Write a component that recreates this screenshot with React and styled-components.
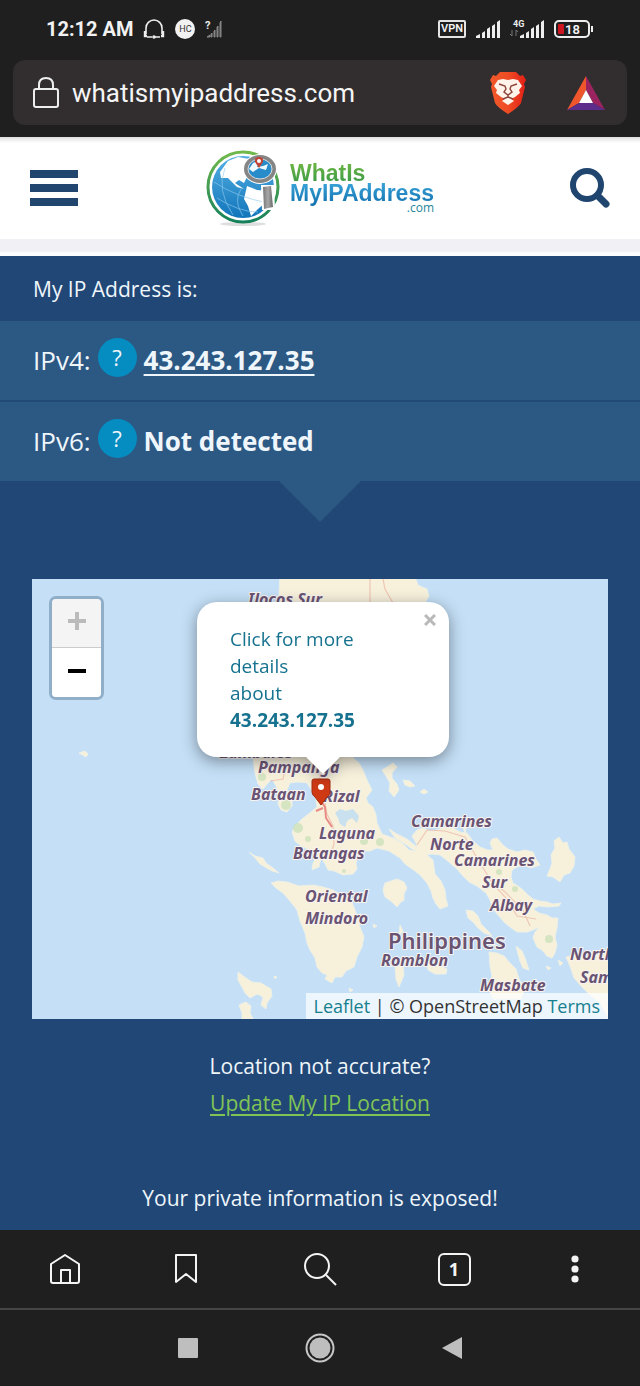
import React, { useState } from "react";
import styled, { createGlobalStyle } from "styled-components";

const GlobalStyle = createGlobalStyle`
  * {
    box-sizing: border-box;
  }
  body {
    margin: 0;
    background: #1f1f1f;
    font-family: "Open Sans", "Noto Sans", sans-serif;
  }
  button {
    border: 0;
    padding: 0;
    background: none;
    color: inherit;
    font: inherit;
    cursor: pointer;
  }
  svg {
    display: block;
  }
`;

/* ---------- status bar and address bar ---------- */

const StatusBar = styled.div`
  display: flex;
  align-items: center;
  justify-content: space-between;
  height: 60px;
  padding: 0 45px 2px 46px;
  color: #f2f2f2;
  font-family: Roboto, sans-serif;
`;

const StatusGroup = styled.div`
  display: flex;
  align-items: center;
  gap: ${(props) => props.$gap};
`;

const Clock = styled.time`
  font-size: 20px;
  font-weight: 700;
`;

const VpnBadge = styled.span`
  padding: 0 1px;
  border: 2px solid #e4e4e4;
  border-radius: 2px;
  font-size: 11px;
  font-weight: 600;
  line-height: 14px;
`;

const RoundBadge = styled.span`
  width: 20px;
  height: 20px;
  border-radius: 50%;
  background: #f2f2f2;
  color: #333;
  font-size: 9px;
  line-height: 20px;
  text-align: center;
`;

const AddressBar = styled.div`
  display: flex;
  align-items: center;
  gap: 13px;
  height: 65px;
  margin: 0 13px 12px;
  padding: 0 22px 0 20px;
  border-radius: 12px;
  background: #322e2f;
`;

const AddressInput = styled.input`
  flex: 1;
  min-width: 0;
  padding: 0;
  border: 0;
  outline: 0;
  background: none;
  color: #f5f5f5;
  font-family: Roboto, sans-serif;
  font-size: 26px;
`;

const BarButton = styled.button`
  margin-left: ${(props) => props.$space || "0"};
`;

/* ---------- site header ---------- */

const SiteHeader = styled.header`
  display: flex;
  align-items: center;
  justify-content: space-between;
  height: 102px;
  padding: 0 30px;
  background: linear-gradient(#dedede, #fff 6px);
`;

const HeaderStrip = styled.div`
  height: 17px;
  border-bottom: 4px solid #fbfdfd;
  background: #f0f0f5;
`;

const MenuButton = styled.button`
  display: flex;
  flex-direction: column;
  gap: 6px;
  width: 48px;
`;

const MenuLine = styled.span`
  height: 8px;
  background: #20456f;
`;

const Logo = styled.a`
  display: flex;
  align-items: center;
  gap: 8px;
  margin-right: 8px;
  text-decoration: none;
`;

const LogoText = styled.span`
  display: flex;
  flex-direction: column;
  font-family: "Liberation Sans", Arial, sans-serif;
  font-size: 23px;
  font-weight: 700;
  line-height: 20px;
`;

const LogoLine = styled.span`
  margin-bottom: -5px;
  padding-bottom: 5px;
  background: ${(props) => props.$fill};
  background-clip: text;
  color: transparent;
`;

const LogoDomain = styled.span`
  align-self: flex-end;
  color: #27869b;
  font-family: "Open Sans", sans-serif;
  font-size: 12px;
  font-weight: 500;
  line-height: 10px;
`;

/* ---------- ip panel ---------- */

const Main = styled.main`
  background: #214776;
  color: #eff6fb;
`;

const Heading = styled.h1`
  margin: 0;
  padding: 2px 33px 0;
  font-size: 21px;
  font-weight: 400;
  line-height: 63px;
`;

const IpRow = styled.div`
  display: flex;
  align-items: center;
  gap: 7px;
  height: ${(props) => (props.$divided ? "81px" : "79px")};
  padding: 0 33px 2px;
  border-bottom: ${(props) => (props.$divided ? "2px solid #214a77" : "0")};
  background: #2c5884;
`;

const IpLabel = styled.span`
  font-size: 26px;
`;

const HelpButton = styled.button`
  width: 39px;
  height: 39px;
  margin-bottom: 4px;
  border-radius: 50%;
  background: #058cc0;
  font-size: 22px;
  line-height: 39px;
`;

const IpValue = styled.strong`
  font-size: 26px;
  font-weight: 700;
`;

const IpLink = styled.a`
  color: inherit;
  text-decoration-thickness: 2px;
  text-underline-offset: 4px;
`;

const PanelArrow = styled.div`
  width: 82px;
  height: 41px;
  margin: 0 auto 57px;
  background: #2c5884;
  clip-path: polygon(0 0, 100% 0, 50% 100%);
`;

/* ---------- map ---------- */

const MapFrame = styled.section`
  position: relative;
  height: 440px;
  margin: 0 32px;
  overflow: hidden;
  background: #c4dff6;
`;

const ZoomControl = styled.div`
  position: absolute;
  top: 17px;
  left: 17px;
  display: flex;
  flex-direction: column;
  width: 55px;
  border: 3px solid #91aec9;
  border-radius: 7px;
  overflow: hidden;
`;

const ZoomButton = styled.button`
  display: grid;
  place-items: center;
  height: 48px;
  padding-bottom: 4px;
  background: ${(props) => (props.disabled ? "#f4f4f4" : "#fff")};
  color: ${(props) => (props.disabled ? "#bbb" : "#000")};
  & + & {
    height: 50px;
    border-top: 1px solid #ccc;
  }
`;

const PopupAnchor = styled.div`
  position: absolute;
  top: 23px;
  left: 50%;
  width: 252px;
  margin-left: -123px;
  filter: drop-shadow(0 4px 8px rgba(0, 0, 0, 0.4));
`;

const PopupCard = styled.div`
  height: 155px;
  padding: 24px 60px 22px 33px;
  border-radius: 20px;
  background: #fff;
`;

const PopupLink = styled.a`
  display: block;
  color: #16728f;
  font-size: 19px;
  line-height: 27px;
  text-decoration: none;
`;

const PopupTip = styled.div`
  width: 36px;
  height: 18px;
  margin: -1px auto 0;
  background: #fff;
  clip-path: polygon(0 0, 100% 0, 50% 100%);
`;

const PopupClose = styled.button`
  position: absolute;
  top: 12px;
  right: 13px;
  color: #b9b9b9;
`;

const Attribution = styled.div`
  position: absolute;
  right: 0;
  bottom: 0;
  padding: 0 8px;
  background: rgba(255, 255, 255, 0.7);
  color: #333;
  font-size: 18px;
  line-height: 26px;
  white-space: nowrap;
`;

const MapLink = styled.a`
  color: #17808f;
  text-decoration: none;
`;

const Notes = styled.div`
  padding: 29px 32px 13px;
  font-size: 21px;
  line-height: 37px;
  text-align: center;
`;

const Note = styled.p`
  margin: ${(props) => props.$top || "0"} 0 0;
`;

const UpdateLink = styled.a`
  color: #80c455;
  text-underline-offset: 3px;
`;

/* ---------- bottom bars ---------- */

const BrowserBar = styled.nav`
  display: grid;
  grid-template-columns: 130fr 112fr 156fr 112fr 130fr;
  height: 80px;
  border-bottom: 2px solid #454545;
  color: #f4f4f4;
`;

const ToolButton = styled.button`
  display: grid;
  place-items: center;
`;

const TabCount = styled.span`
  width: 33px;
  height: 33px;
  border: 2px solid #f4f4f4;
  border-radius: 6px;
  font-family: "Noto Sans", sans-serif;
  font-size: 18px;
  font-weight: 700;
  line-height: 29px;
`;

const SystemBar = styled.nav`
  display: flex;
  justify-content: center;
  gap: 68px;
  height: 75px;
`;

const SystemButton = styled(ToolButton)`
  width: 64px;
`;

/* land outlines on a 575 x 440 grid */
const islands = [
  // Luzon
  "M247 -2L382 -2L385 6L389 8L394 10L396 17L392 24L380 60L350 120L320 179L326 184L330 191L334 201L339 211L333 219L335 224L340 228L343 236L344 244L349 255L360 259L369 264L376 271L381 272L384 266L379 257L384 251L390 249L397 252L404 251L412 248L420 249L427 253L434 254L440 262L447 268L455 271L460 271L457 264L459 260L464 259L470 266L475 270L484 273L492 271L500 273L503 280L507 286L498 289L490 286L484 288L479 291L478 298L480 304L485 307L490 311L495 316L500 320L507 322L514 323L520 325L528 324L526 327L514 328L506 327L500 330L506 334L514 336L519 339L525 339L524 349L522 358L524 366L522 374L519 379L514 377L509 371L504 368L500 359L502 353L507 348L500 351L494 353L484 353L477 348L471 343L465 336L460 330L457 321L453 314L444 307L436 303L429 296L424 290L417 284L411 279L407 276L399 275L394 276L400 281L401 288L402 295L408 302L412 311L413 320L415 327L407 330L403 325L400 319L398 312L394 304L387 296L382 292L372 285L367 279L356 272L344 269L337 272L330 272L325 276L323 284L324 290L320 295L310 296L301 292L295 291L291 283L288 279L286 288L279 291L280 284L284 278L277 271L268 267L262 262L259 253L262 247L269 240L278 233L284 228L283 220L279 212L274 204L265 203L257 204L254 211L259 219L259 227L254 233L248 231L245 225L246 216L243 207L239 200L235 204L230 210L225 205L222 194L220 179L240 110Z",
  // Lubang
  "M216 273L222 277L230 279L233 284L240 289L246 294L239 292L232 288L227 285L223 280Z",
  // Mindoro
  "M238 304L245 302L254 303L266 307L280 306L290 308L300 311L308 316L317 318L322 331L325 340L327 348L331 358L329 368L324 378L321 388L313 392L309 398L302 398L299 404L292 400L294 396L289 394L284 388L282 379L277 371L274 364L272 354L267 342L264 331L257 322L250 314L243 309Z",
  // Marinduque
  "M352 304L358 302L364 300L371 303L374 309L371 315L371 321L367 324L364 328L359 323L352 318L350 311Z",
  // Polillo group
  "M349 191L354 188L360 184L364 188L359 194L359 199L364 205L366 211L361 218L356 212L357 204L353 197Z",
  "M370 201L377 202L382 207L377 208L372 206Z",
  "M387 213L391 210L395 213L391 215Z",
  "M356 250L364 255L374 260L384 268L382 272L372 265L362 259Z",
  // Catanduanes
  "M526 258L530 264L534 263L536 270L542 278L541 287L537 294L531 296L527 303L520 298L514 297L517 290L519 284L518 276L522 269L521 262Z",
  // Burias and Ticao
  "M433 331L440 332L445 337L448 345L456 353L459 357L451 354L445 349L440 343L435 339Z",
  "M483 367L489 372L492 379L496 391L490 389L487 382L485 375Z",
  // Masbate
  "M456 373L464 374L471 377L477 384L483 390L486 400L492 410L488 420L460 420L455 408L459 397L457 387Z",
  // Samar
  "M533 378L545 375L555 378L563 376L576 371L576 440L567 424L556 415L549 408L541 399L537 387Z",
  // Romblon and Sibuyan
  "M367 346L370 352L366 356ZM362 388L370 385L371 396L366 408L363 400Z",
  "M394 383L405 386L414 390L413 395L402 395L395 391Z",
  // Calamian
  "M205 393L213 399L219 403L228 404L238 410L239 417L234 424L233 430L228 426L230 418L224 415L217 419L212 414L209 408L205 401Z",
  "M206 426L213 423L218 427L217 434L220 440L209 440L209 434Z",
  "M46 174L52 172L55 175L53 178Z",
  "M513 387L518 389L515 391ZM525 381L530 384L527 387ZM340 345L344 347L341 349ZM430 248L433 249L432 254ZM241 397L244 398L242 400ZM316 409L320 411L317 413Z",
];

const roads = [
  "M278 180L286 192L288 207L291 220L294 235L300 247L301 265L297 277",
  "M237 202L250 200L252 190L262 186",
  "M384 266L394 251L412 252L432 258L444 279L460 305L474 320L484 337L503 340",
  "M456 300L472 313L490 331L497 347",
  "M337 0V24",
  "M350 0L352 10L360 24",
];

const parks = [
  [253, 226, 5],
  [265, 249, 5],
  [229, 198, 4],
  [347, 263, 4],
  [466, 293, 3],
  [482, 310, 3],
  [516, 360, 4],
  [275, 260, 3],
  [311, 292, 2],
  [331, 262, 4],
];

const places = [
  { name: "Ilocos Sur", x: 215, y: 26 },
  { name: "Zambales", x: 187, y: 179 },
  { name: "Pampanga", x: 225, y: 194 },
  { name: "Bataan", x: 218, y: 221 },
  { name: "Rizal", x: 290, y: 223 },
  { name: "Laguna", x: 286, y: 260 },
  { name: "Batangas", x: 260, y: 280 },
  { name: "Oriental", x: 272, y: 323 },
  { name: "Mindoro", x: 272, y: 345 },
  { name: "Camarines", x: 378, y: 248 },
  { name: "Norte", x: 397, y: 271 },
  { name: "Camarines", x: 421, y: 287 },
  { name: "Sur", x: 449, y: 309 },
  { name: "Albay", x: 457, y: 332 },
  { name: "Romblon", x: 348, y: 387 },
  { name: "Masbate", x: 447, y: 412 },
  { name: "Northern", x: 537, y: 381 },
  { name: "Samar", x: 547, y: 404 },
];

const PlaceName = styled.text`
  fill: #6a5474;
  stroke: #f8f3ef;
  stroke-width: 2px;
  paint-order: stroke;
  font-family: "Noto Sans", sans-serif;
  font-size: ${(props) => (props.$country ? "22px" : "16px")};
  font-style: ${(props) => (props.$country ? "normal" : "italic")};
  font-weight: ${(props) => (props.$country ? 600 : 700)};
`;

const MapCanvas = () => (
  <svg
    width="100%"
    height="100%"
    viewBox="-1 0 576 440"
    preserveAspectRatio="xMidYMid slice"
  >
    <g fill="#f7f1dc" stroke="#edf0e6" strokeLinejoin="round">
      {islands.map((d) => (
        <path key={d} d={d} />
      ))}
    </g>
    <path
      d="M302 234L307 230L313 232L320 230L326 237L324 244L319 239L314 242L312 248L307 245L305 239Z"
      fill="#c9e0ef"
    />
    <g fill="#c9dfb8">
      {parks.map(([x, y, r]) => (
        <circle key={`${x}-${y}`} cx={x} cy={y} r={r} opacity="0.75" />
      ))}
    </g>
    <g fill="none" stroke="#ecb9a6" strokeWidth="1.2" opacity="0.75">
      {roads.map((d) => (
        <path key={d} d={d} />
      ))}
    </g>
    <path
      d="M288 222L292 228L293 239L299 248M290 229L283 232"
      fill="none"
      stroke="#e98b86"
      strokeWidth="2"
    />
    {places.map((place) => (
      <PlaceName key={place.name + place.y} x={place.x} y={place.y}>
        {place.name}
      </PlaceName>
    ))}
    <PlaceName $country x="355" y="370">
      Philippines
    </PlaceName>
    <path
      d="M281 200H295Q297 200 297 202V213Q297 216 294 218L288 226L282 218Q279 216 279 213V202Q279 200 281 200Z"
      fill="#cf3a15"
      stroke="#9f2c12"
    />
    <circle cx="288" cy="208" r="3" fill="#fff" />
  </svg>
);

const SignalIcon = () => (
  <svg width="24" height="18" viewBox="0 0 24 18" fill="#eee">
    <path d="M0 18V16L4 14V18ZM6 13L9 11V18H6ZM11 9L14 7V18H11ZM16 6L19 4V18H16ZM21 2L24 0V18H21Z" />
  </svg>
);

const HeadsetIcon = () => (
  <svg width="22" height="20" viewBox="0 0 22 20" fill="none" stroke="#eee" strokeWidth="1.6">
    <path d="M3 15V9A8 8 0 0 1 19 9V15" />
    <path d="M2 12V17H4M20 12V17H18" strokeWidth="2.4" />
    <path d="M4 18H9M12 18H17" />
    <circle cx="11" cy="18" r="1" fill="#eee" />
  </svg>
);

const NoSimIcon = () => (
  <svg width="17" height="18" viewBox="0 0 17 18">
    <path
      d="M2 17L5 15V17ZM6 14L7 13V17H6ZM9 11L10 10V17H9ZM12 7L13 6V17H12ZM15 3L16 1V17H15Z"
      fill="#777"
      stroke="#888"
    />
    <text x="0" y="9" fill="#eee" fontFamily="Roboto" fontSize="11" fontWeight="700">
      ?
    </text>
  </svg>
);

const MobileIcon = () => (
  <svg width="34" height="20" viewBox="0 0 34 20">
    <g fill="#eee">
      <path d="M10 19V17L14 15V19ZM16 14L19 12V19H16ZM21 10L24 8V19H21ZM26 7L29 5V19H26ZM31 3L34 1V19H31Z" />
      <text x="3" y="8" fontFamily="Roboto" fontSize="9" fontWeight="700">
        4G
      </text>
    </g>
    <path d="M2 11V17L0 15M6 17V11L8 13" fill="none" stroke="#777" />
  </svg>
);

const BatteryIcon = () => (
  <svg width="41" height="18" viewBox="0 0 41 18">
    <rect x="1" y="1" width="34" height="16" rx="4" fill="none" stroke="#eee" strokeWidth="2" />
    <rect x="4" y="4" width="6" height="10" rx="1" fill="#cc1620" />
    <path d="M37 6H39V12H37Z" fill="#eee" />
    <text x="11" y="14" fill="#f4f4f4" fontFamily="Roboto" fontSize="13" fontWeight="600">
      18
    </text>
  </svg>
);

const LockIcon = () => (
  <svg width="26" height="31" viewBox="0 0 26 31" fill="none" stroke="#eee" strokeWidth="2">
    <rect x="1" y="12" width="24" height="18" rx="2" />
    <path d="M6 12V8Q6 1 13 1T20 8V12" />
  </svg>
);

const BraveIcon = () => (
  <svg width="36" height="43" viewBox="0 0 36 43">
    <defs>
      <linearGradient id="brave">
        <stop offset="0" stopColor="#f1592a" />
        <stop offset="0.5" stopColor="#ef4c24" />
        <stop offset="1" stopColor="#e21f16" />
      </linearGradient>
    </defs>
    <path
      d="M10 1H26L30 5L33 4L36 9L34 13L35 16L31 32Q29 36 18 43Q7 36 5 32L1 16L2 13L0 9L3 4L6 5Z"
      fill="url(#brave)"
    />
    <path
      d="M8 9L13 8L18 9L23 8L28 9L32 15L29 19L30 22L25 26L21 28L24 30L18 34L12 30L15 28L11 26L6 22L7 19L4 15Z"
      fill="#fff3ea"
    />
    <path
      d="M9 13L15 15L16 18L14 21L18 24L22 21L20 18L21 15L27 13M18 24V26L13 28M18 26L23 28"
      fill="none"
      stroke="#8d463b"
      strokeWidth="1.4"
    />
  </svg>
);

const RewardsIcon = () => (
  <svg width="38" height="34" viewBox="0 0 38 34">
    <path d="M19 0L0 34L12 27L19 14Z" fill="#f0562b" />
    <path d="M19 0L38 34L26 27L19 14Z" fill="#9b2460" />
    <path d="M0 34H38L26 27H12Z" fill="#5d2d8c" />
    <path d="M19 14L12 27H26Z" fill="#fff" />
  </svg>
);

const GlobeLogo = () => (
  <svg width="76" height="78" viewBox="0 0 76 78">
    <defs>
      <linearGradient id="ring" x2="0" y2="1">
        <stop offset="0" stopColor="#72b94c" />
        <stop offset="1" stopColor="#15815a" />
      </linearGradient>
      <linearGradient id="sea" x2="0" y2="1">
        <stop offset="0" stopColor="#55b0e2" />
        <stop offset="1" stopColor="#1175bb" />
      </linearGradient>
      <linearGradient id="metal">
        <stop offset="0" stopColor="#777" />
        <stop offset="0.5" stopColor="#a8a8a8" />
        <stop offset="1" stopColor="#666" />
      </linearGradient>
    </defs>
    <ellipse cx="37" cy="75" rx="23" ry="2" fill="#dedede" />
    <circle cx="37" cy="38" r="35" fill="#fff" stroke="url(#ring)" strokeWidth="3" />
    <circle cx="37" cy="38" r="31" fill="url(#sea)" />
    <path
      d="M14 23L22 12L32 8L43 10L48 22L42 26L38 34L33 31L29 34L38 40L31 38L22 29L15 29ZM41 37L51 41L64 42L60 53L52 60L45 67L42 57L38 50ZM26 11L34 9L31 14L25 15Z"
      fill="#fff"
    />
    <path
      d="M8 33Q30 48 62 54M11 49Q33 63 52 63M19 19Q10 41 27 66M35 40Q27 52 37 67"
      fill="none"
      stroke="#8fcaee"
      strokeWidth="0.8"
      opacity="0.8"
    />
    <path d="M55 36H68L69 61H56Z" fill="#fff" />
    <path d="M57 38L65 37L67 58L58 60Z" fill="url(#metal)" />
    <ellipse cx="54" cy="20" rx="17" ry="15" fill="#fff" />
    <ellipse cx="54" cy="20" rx="14" ry="12" fill="#288cca" stroke="#858585" strokeWidth="4" />
    <ellipse cx="54" cy="20" rx="12" ry="10" fill="none" stroke="#ddd" />
    <path d="M47 14L54 11L51 18L57 17L62 15L60 21L53 19L47 23L43 20Z" fill="#edf8ff" />
    <path d="M53 19L49 13Q48 8 53 8T57 13Z" fill="#bf4435" />
    <circle cx="53" cy="12" r="2" fill="#fff" />
  </svg>
);

const App = () => {
  const [address, setAddress] = useState("whatismyipaddress.com");
  const [showPopup, setShowPopup] = useState(true);

  return (
    <>
      <GlobalStyle />
      <StatusBar>
        <StatusGroup $gap="10px">
          <Clock>12:12 AM</Clock>
          <HeadsetIcon />
          <RoundBadge>HC</RoundBadge>
          <NoSimIcon />
        </StatusGroup>
        <StatusGroup $gap="10px">
          <VpnBadge>VPN</VpnBadge>
          <SignalIcon />
          <MobileIcon />
          <BatteryIcon />
        </StatusGroup>
      </StatusBar>
      <AddressBar>
        <LockIcon />
        <AddressInput
          aria-label="Address"
          value={address}
          onChange={(e) => setAddress(e.target.value)}
        />
        <BarButton aria-label="Shields">
          <BraveIcon />
        </BarButton>
        <BarButton aria-label="Rewards" $space="28px">
          <RewardsIcon />
        </BarButton>
      </AddressBar>

      <SiteHeader>
        <MenuButton aria-label="Menu">
          <MenuLine />
          <MenuLine />
          <MenuLine />
        </MenuButton>
        <Logo href="#home">
          <GlobeLogo />
          <LogoText>
            <LogoLine $fill="linear-gradient(#6db544, #2f9447)">WhatIs</LogoLine>
            <LogoLine $fill="linear-gradient(#38a3d8, #0d6aa8)">
              MyIPAddress
            </LogoLine>
            <LogoDomain>.com</LogoDomain>
          </LogoText>
        </Logo>
        <button aria-label="Search site">
          <svg width="40" height="40" viewBox="0 0 40 40" fill="none" stroke="#20456f">
            <circle cx="17" cy="17" r="14" strokeWidth="6" />
            <path d="M28 28L36 36" strokeWidth="7" strokeLinecap="round" />
          </svg>
        </button>
      </SiteHeader>
      <HeaderStrip />

      <Main>
        <Heading>My IP Address is:</Heading>
        <IpRow $divided>
          <IpLabel>IPv4:</IpLabel>
          <HelpButton aria-label="About IPv4">?</HelpButton>
          <IpValue>
            <IpLink href="#ip">43.243.127.35</IpLink>
          </IpValue>
        </IpRow>
        <IpRow>
          <IpLabel>IPv6:</IpLabel>
          <HelpButton aria-label="About IPv6">?</HelpButton>
          <IpValue>Not detected</IpValue>
        </IpRow>
        <PanelArrow />

        <MapFrame>
          <MapCanvas />
          <ZoomControl>
            <ZoomButton aria-label="Zoom in" disabled>
              <svg width="18" height="18" stroke="currentColor" strokeWidth="4">
                <path d="M9 0V18M0 9H18" />
              </svg>
            </ZoomButton>
            <ZoomButton aria-label="Zoom out">
              <svg width="18" height="4" fill="currentColor">
                <rect width="18" height="4" />
              </svg>
            </ZoomButton>
          </ZoomControl>
          {showPopup && (
            <PopupAnchor>
              <PopupCard>
                <PopupLink href="#details">
                  Click for more details
                  <br />
                  about <strong>43.243.127.35</strong>
                </PopupLink>
              </PopupCard>
              <PopupTip />
              <PopupClose aria-label="Close" onClick={() => setShowPopup(false)}>
                <svg width="12" height="12" stroke="currentColor" strokeWidth="3">
                  <path d="M1 1L11 11M11 1L1 11" />
                </svg>
              </PopupClose>
            </PopupAnchor>
          )}
          <Attribution>
            <MapLink href="#leaflet">Leaflet</MapLink> | © OpenStreetMap{" "}
            <MapLink href="#terms">Terms</MapLink>
          </Attribution>
        </MapFrame>

        <Notes>
          <Note>Location not accurate?</Note>
          <Note>
            <UpdateLink href="#update">Update My IP Location</UpdateLink>
          </Note>
          <Note $top="58px">Your private information is exposed!</Note>
        </Notes>
      </Main>

      <BrowserBar>
        <ToolButton aria-label="Home">
          <svg width="30" height="30" viewBox="0 0 30 30" fill="none" stroke="currentColor" strokeWidth="2" strokeLinejoin="round">
            <path d="M1 10L15 1L29 10V27Q29 29 27 29H3Q1 29 1 27Z" />
            <path d="M11 29V16H20V29" />
          </svg>
        </ToolButton>
        <ToolButton aria-label="Bookmarks">
          <svg width="22" height="30" viewBox="0 0 22 30" fill="none" stroke="currentColor" strokeWidth="2" strokeLinejoin="round">
            <path d="M1 1H21V28L11 20L1 28Z" />
          </svg>
        </ToolButton>
        <ToolButton aria-label="Search">
          <svg width="34" height="34" viewBox="0 0 34 34" fill="none" stroke="currentColor" strokeWidth="2">
            <circle cx="14" cy="14" r="12" />
            <path d="M23 23L33 33" />
          </svg>
        </ToolButton>
        <ToolButton aria-label="Tabs">
          <TabCount>1</TabCount>
        </ToolButton>
        <ToolButton aria-label="More">
          <svg width="8" height="28" viewBox="0 0 8 28" fill="currentColor">
            <circle cx="4" cy="4" r="3.6" />
            <circle cx="4" cy="14" r="3.6" />
            <circle cx="4" cy="24" r="3.6" />
          </svg>
        </ToolButton>
      </BrowserBar>
      <SystemBar>
        <SystemButton aria-label="Recent apps">
          <svg width="20" height="20" fill="#bebebe">
            <rect width="20" height="20" rx="1" />
          </svg>
        </SystemButton>
        <SystemButton aria-label="Home screen">
          <svg width="30" height="30" viewBox="0 0 30 30">
            <circle cx="15" cy="15" r="13.5" fill="none" stroke="#c6c6c6" strokeWidth="2" />
            <circle cx="15" cy="15" r="10.5" fill="#bebebe" />
          </svg>
        </SystemButton>
        <SystemButton aria-label="Back">
          <svg width="20" height="22" viewBox="0 0 20 22" fill="#bebebe">
            <path d="M20 0V22L0 11Z" />
          </svg>
        </SystemButton>
      </SystemBar>
    </>
  );
};

export default App;
